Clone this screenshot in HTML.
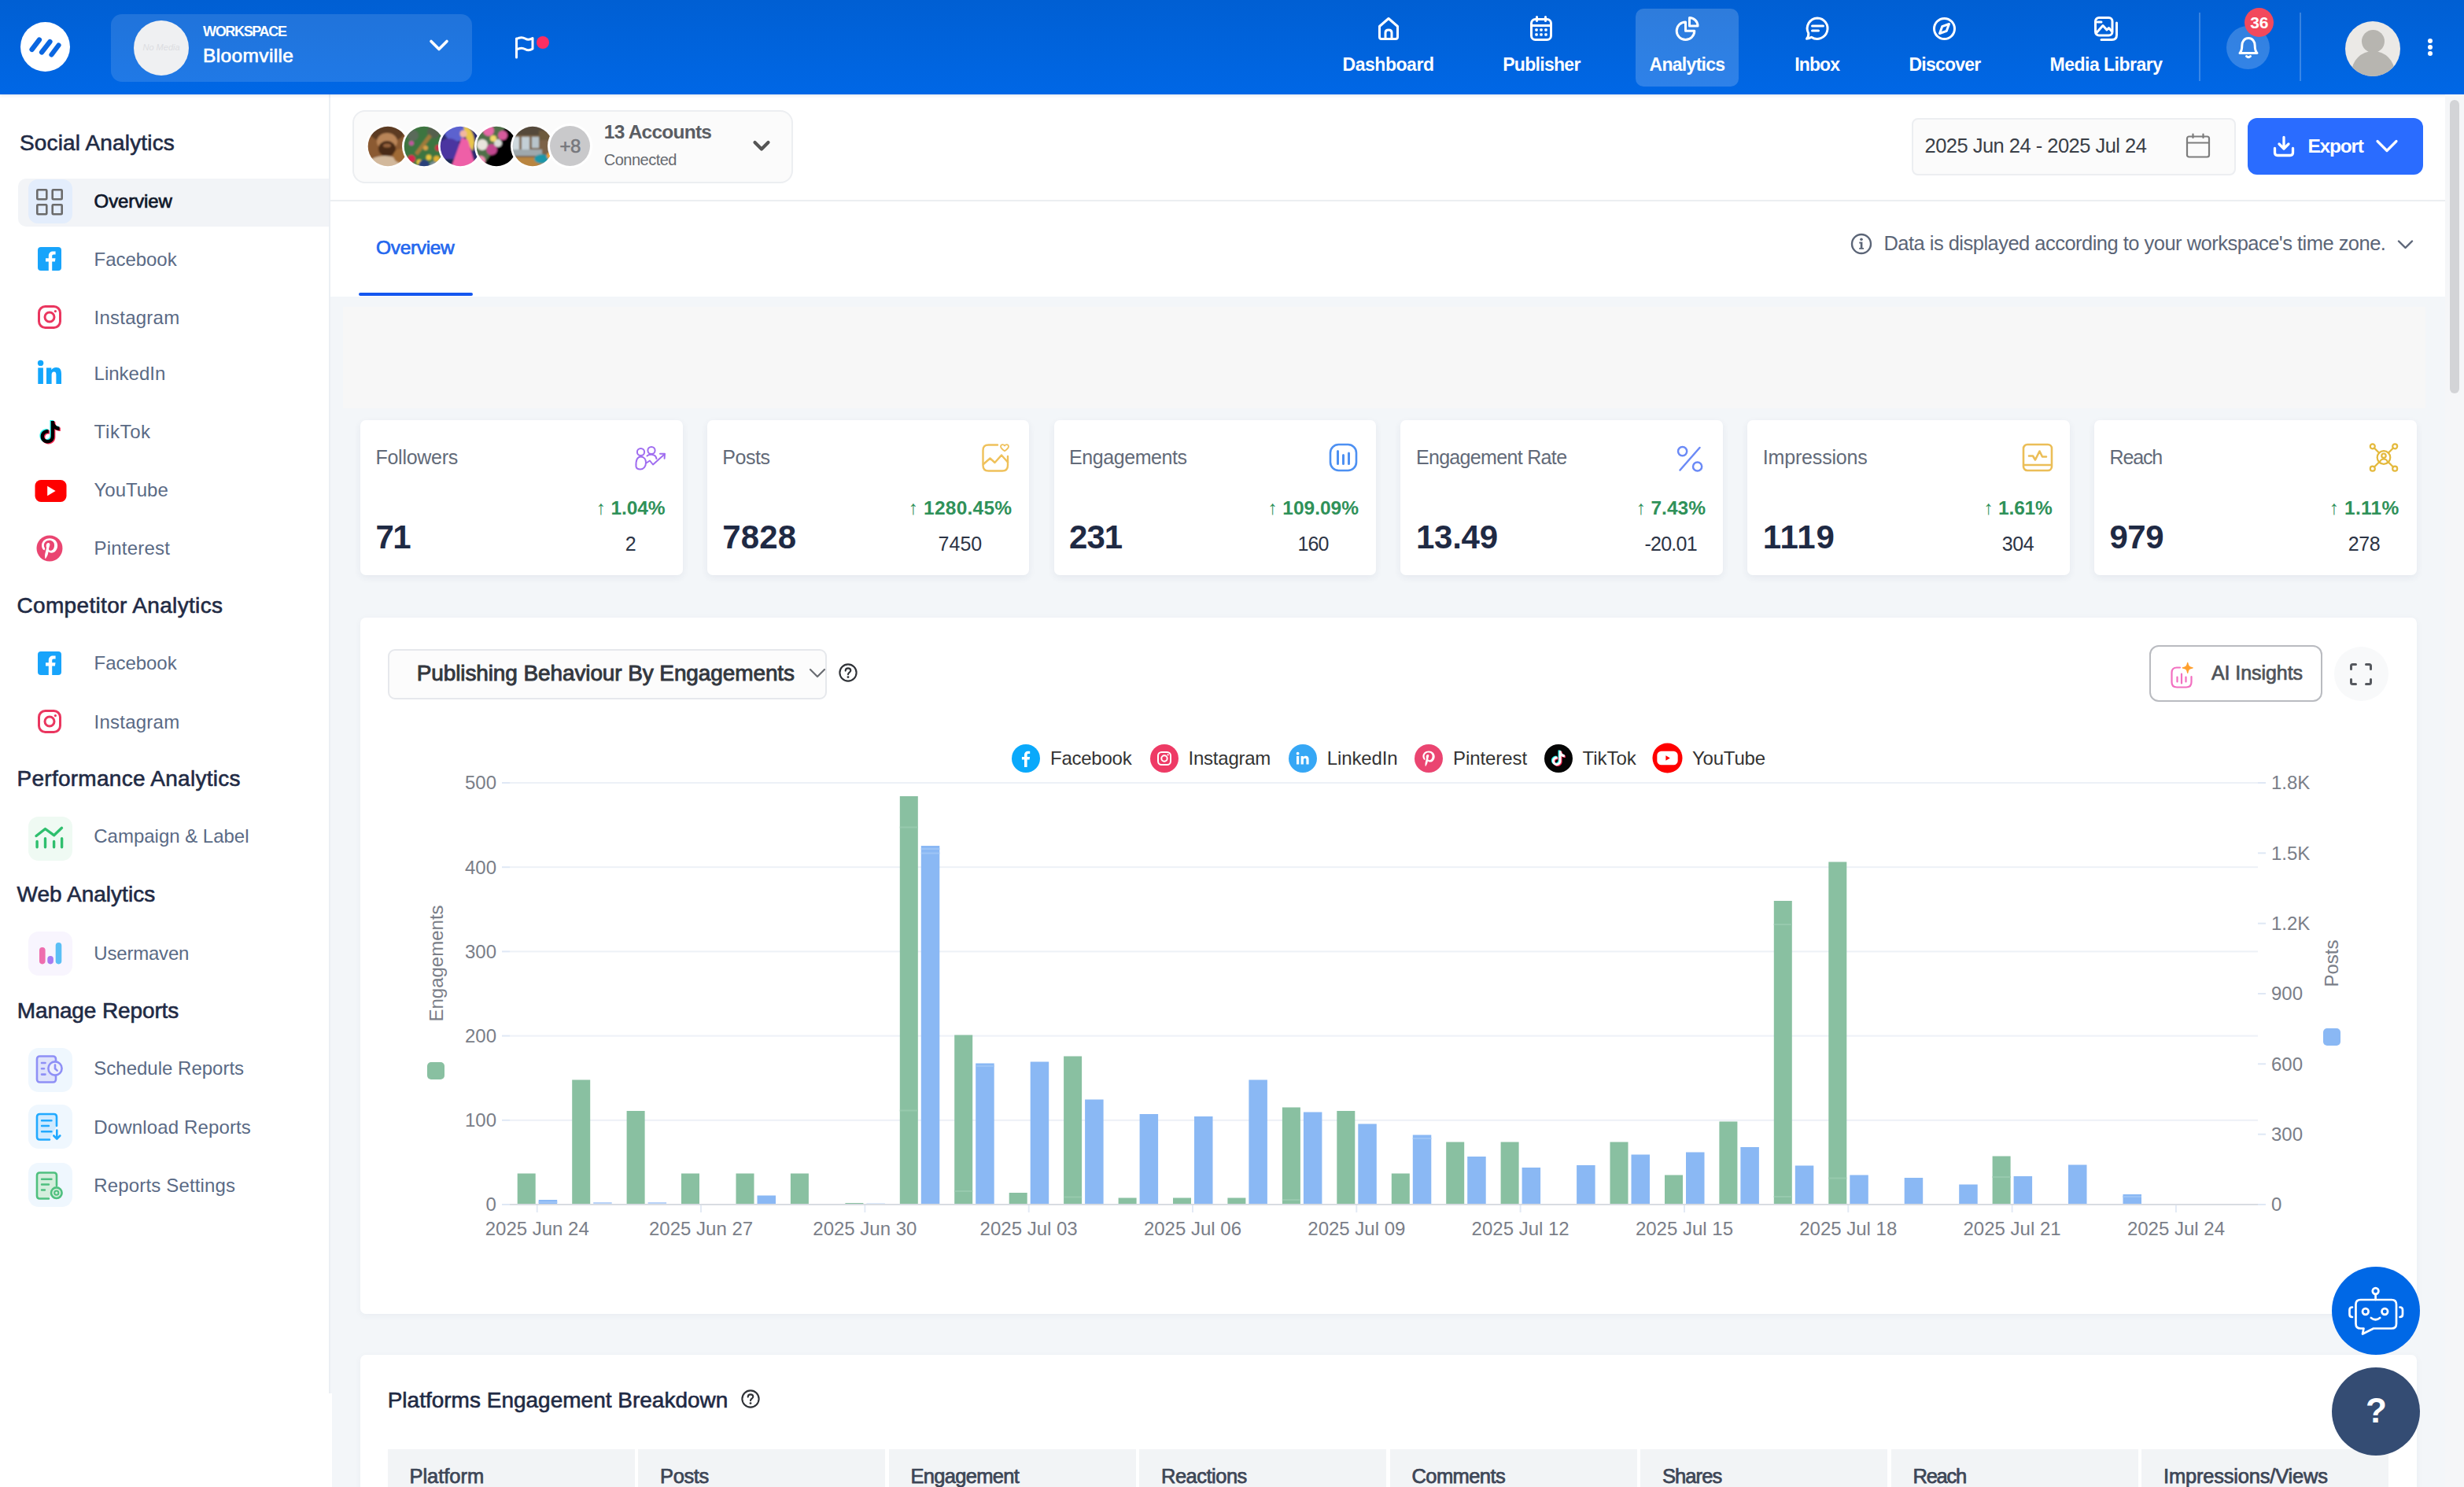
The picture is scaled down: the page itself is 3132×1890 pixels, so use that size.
<!DOCTYPE html>
<html lang="en"><head><meta charset="utf-8"><title>Analytics Overview</title><style>
*{box-sizing:border-box}
html,body{margin:0;padding:0}
body{width:3132px;height:1890px;overflow:hidden;background:#f3f6f9;font-family:"Liberation Sans",sans-serif;position:relative}
.t{position:absolute;white-space:pre;line-height:1}
.abs{position:absolute}
</style></head>
<body>
<div style="position:absolute;left:420px;top:120px;width:2688px;height:257px;background:#fff"></div>
<div style="position:absolute;left:420px;top:254px;width:2688px;height:2px;background:#eceef1"></div>
<div style="position:absolute;left:436px;top:390px;width:2647px;height:128.5px;background:#f7f7f7"></div>
<div style="position:absolute;left:0px;top:120px;width:419px;height:1770px;background:#fff"></div>
<div style="position:absolute;left:418px;top:120px;width:2px;height:1651px;background:#ebeff4"></div>
<div style="position:absolute;left:419px;top:1771px;width:2.5px;height:119px;background:#fff"></div>
<div style="position:absolute;left:448px;top:140px;width:560px;height:93px;background:#fbfbfb;border:2px solid #eceef1;border-radius:16px"></div>
<svg style="position:absolute;left:464.5px;top:157.8px;" width="56" height="56" viewBox="0 0 56 56" fill="none"><circle cx="28" cy="28" r="28" fill="#fff"/><clipPath id="av0"><circle cx="28" cy="28" r="25.3"/></clipPath><filter id="bl0" x="-10%" y="-10%" width="120%" height="120%"><feGaussianBlur stdDeviation="0.9"/></filter><g clip-path="url(#av0)"><g filter="url(#bl0)"><rect width="56" height="56" fill="#8b5a31"/><ellipse cx="27" cy="10" rx="22" ry="12" fill="#5b3a20"/><ellipse cx="27" cy="22" rx="13" ry="11" fill="#b98558"/><ellipse cx="27" cy="31" rx="11" ry="10" fill="#4a2c17"/><ellipse cx="27" cy="27" rx="5" ry="2.5" fill="#94623d"/><ellipse cx="24" cy="52" rx="22" ry="12" fill="#d2b89b"/><circle cx="44" cy="40" r="9" fill="#a06a35"/></g></g></svg>
<svg style="position:absolute;left:510.6px;top:157.8px;" width="56" height="56" viewBox="0 0 56 56" fill="none"><circle cx="28" cy="28" r="28" fill="#fff"/><clipPath id="av1"><circle cx="28" cy="28" r="25.3"/></clipPath><filter id="bl1" x="-10%" y="-10%" width="120%" height="120%"><feGaussianBlur stdDeviation="0.9"/></filter><g clip-path="url(#av1)"><g filter="url(#bl1)"><rect width="56" height="56" fill="#3d7440"/><circle cx="14" cy="14" r="7" fill="#5a6b5a"/><circle cx="40" cy="10" r="8" fill="#54614e"/><path d="M18 38 L36 14" stroke="#a07a3a" stroke-width="5"/><circle cx="12" cy="44" r="5" fill="#d8284f"/><circle cx="22" cy="48" r="3.5" fill="#e8c43c"/><circle cx="34" cy="42" r="3.5" fill="#e8c43c"/><circle cx="44" cy="44" r="4" fill="#e0b030"/><circle cx="46" cy="30" r="4" fill="#c93048"/><circle cx="28" cy="52" r="7" fill="#2b3f7a"/><circle cx="12" cy="24" r="3" fill="#c257a0"/><circle cx="30" cy="30" r="3" fill="#d9a24a"/><circle cx="40" cy="52" r="5" fill="#7d8f95"/></g></g></svg>
<svg style="position:absolute;left:556.7px;top:157.8px;" width="56" height="56" viewBox="0 0 56 56" fill="none"><circle cx="28" cy="28" r="28" fill="#fff"/><clipPath id="av2"><circle cx="28" cy="28" r="25.3"/></clipPath><filter id="bl2" x="-10%" y="-10%" width="120%" height="120%"><feGaussianBlur stdDeviation="0.9"/></filter><g clip-path="url(#av2)"><g filter="url(#bl2)"><rect width="56" height="56" fill="#2a2a6e"/><circle cx="22" cy="8" r="14" fill="#5b62cf"/><circle cx="14" cy="34" r="16" fill="#4b35a0"/><rect x="0" y="44" width="30" height="14" fill="#1e2a55"/><path d="M32 2 C40 2 46 12 46 24 L44 34 L38 26 L34 12 Z" fill="#e9c648"/><circle cx="32" cy="12" r="4.5" fill="#f2b6a0"/><path d="M30 17 L38 20 L48 56 L16 56 Z" fill="#ee5fa7"/><path d="M50 0 H56 V20 Z" fill="#5a55c8"/></g></g></svg>
<svg style="position:absolute;left:602.8px;top:157.8px;" width="56" height="56" viewBox="0 0 56 56" fill="none"><circle cx="28" cy="28" r="28" fill="#fff"/><clipPath id="av3"><circle cx="28" cy="28" r="25.3"/></clipPath><filter id="bl3" x="-10%" y="-10%" width="120%" height="120%"><feGaussianBlur stdDeviation="0.9"/></filter><g clip-path="url(#av3)"><g filter="url(#bl3)"><rect width="56" height="56" fill="#050505"/><path d="M0 0 H40 L30 26 L8 56 H0 Z" fill="#50704a"/><circle cx="18" cy="8" r="7" fill="#e868a8"/><circle cx="36" cy="14" r="6" fill="#d85a9c"/><circle cx="10" cy="26" r="7" fill="#e9e4dc"/><circle cx="22" cy="32" r="7" fill="#c2478f"/><circle cx="30" cy="24" r="5" fill="#d9dcd7"/><circle cx="8" cy="46" r="6" fill="#f08fb5"/><circle cx="24" cy="18" r="4" fill="#f4d96c"/></g></g></svg>
<svg style="position:absolute;left:648.9px;top:157.8px;" width="56" height="56" viewBox="0 0 56 56" fill="none"><circle cx="28" cy="28" r="28" fill="#fff"/><clipPath id="av4"><circle cx="28" cy="28" r="25.3"/></clipPath><filter id="bl4" x="-10%" y="-10%" width="120%" height="120%"><feGaussianBlur stdDeviation="0.9"/></filter><g clip-path="url(#av4)"><g filter="url(#bl4)"><rect width="56" height="56" fill="#7c6348"/><rect x="0" y="0" width="56" height="14" fill="#55483a"/><rect x="2" y="16" width="9" height="16" fill="#cfd9de"/><rect x="14" y="16" width="10" height="16" fill="#c3cfd6"/><rect x="27" y="16" width="9" height="14" fill="#b8c4cb"/><rect x="0" y="32" width="40" height="8" fill="#9fa9ad"/><rect x="0" y="42" width="56" height="14" fill="#b9853f"/><ellipse cx="40" cy="44" rx="10" ry="6" fill="#1f96a8"/><circle cx="50" cy="40" r="4" fill="#f0a030"/><rect x="36" y="8" width="20" height="12" fill="#6d5a3c"/></g></g></svg>
<div style="position:absolute;left:696.1px;top:157.3px;width:57px;height:57px;background:#fff;border-radius:50%"></div>
<div style="position:absolute;left:699.1px;top:160.3px;width:51px;height:51px;background:#c9c9cb;border-radius:50%"></div>
<span class="t" style="left:711.6px;top:174.0px;font-size:24px;color:#77787d;letter-spacing:-0.69px;-webkit-text-stroke:0.6px #77787d;">+8</span>
<span class="t" style="left:767.8px;top:155.9px;font-size:24.5px;color:#5a5d63;font-weight:700;letter-spacing:-0.76px;">13 Accounts</span>
<span class="t" style="left:767.8px;top:193.1px;font-size:20px;color:#666a70;letter-spacing:-0.51px;">Connected</span>
<svg style="position:absolute;left:955px;top:176px;" width="26" height="20" viewBox="0 0 26 20" fill="none"><path d="M4.5 5 L13 13.5 L21.5 5" stroke="#555" stroke-width="4.2" stroke-linecap="round" stroke-linejoin="round"/></svg>
<div style="position:absolute;left:2430px;top:150px;width:412px;height:73px;background:#fbfbfb;border:2px solid #eceef1;border-radius:8px"></div>
<span class="t" style="left:2446.5px;top:173.0px;font-size:25.5px;color:#3a3f47;letter-spacing:-0.52px;">2025 Jun 24 - 2025 Jul 24</span>
<svg style="position:absolute;left:2777px;top:168px;" width="34" height="34" viewBox="0 0 34 34" fill="none"><g stroke="#7d7d7d" stroke-width="2.2" stroke-linejoin="round" stroke-linecap="round"><rect x="3" y="5.5" width="28" height="26" rx="2.5"/><path d="M3 13.5 H31 M10.5 2.5 V7 M23.5 2.5 V7"/></g></svg>
<div style="position:absolute;left:2857px;top:150px;width:223px;height:72px;background:#2a6cff;border-radius:12px"></div>
<svg style="position:absolute;left:2888px;top:171px;" width="30" height="30" viewBox="0 0 30 30" fill="none"><g stroke="#fff" stroke-width="3.3" stroke-linecap="round" stroke-linejoin="round"><path d="M15 3.5 V17.5 M9 12 L15 18 L21 12"/><path d="M3.5 17.5 V23 Q3.5 26.5 7 26.5 H23 Q26.5 26.5 26.5 23 V17.5"/></g></svg>
<span class="t" style="left:2933.4px;top:173.7px;font-size:24.5px;color:#fff;font-weight:700;letter-spacing:-1.22px;">Export</span>
<svg style="position:absolute;left:3018px;top:175px;" width="32" height="22" viewBox="0 0 32 22" fill="none"><path d="M4 4.5 L16 16.5 L28 4.5" stroke="#fff" stroke-width="3.2" stroke-linecap="round" stroke-linejoin="round"/></svg>
<span class="t" style="left:478.0px;top:303.0px;font-size:24.5px;color:#2367ee;letter-spacing:-0.34px;-webkit-text-stroke:0.7px #2367ee;">Overview</span>
<div style="position:absolute;left:456px;top:371.7px;width:144.5px;height:4.6px;background:#1457ef;border-radius:3px"></div>
<svg style="position:absolute;left:2351px;top:295px;" width="30" height="30" viewBox="0 0 30 30" fill="none"><circle cx="15" cy="15" r="12" stroke="#5b6577" stroke-width="2.4"/><g fill="#5b6577"><circle cx="15" cy="9.3" r="1.8"/><path d="M12.3 12.6 H16.4 V20 H18 V21.8 H12.2 V20 H13.8 V14.4 H12.3 Z"/></g></svg>
<span class="t" style="left:2394.4px;top:296.8px;font-size:25.5px;color:#5b6577;letter-spacing:-0.52px;">Data is displayed according to your workspace&#x27;s time zone.</span>
<svg style="position:absolute;left:3045px;top:302px;" width="26" height="18" viewBox="0 0 26 18" fill="none"><path d="M4 4.5 L12.5 13 L21 4.5" stroke="#5b6577" stroke-width="2.4" stroke-linecap="round" stroke-linejoin="round"/></svg>
<div style="position:absolute;left:458.0px;top:534px;width:409.5px;height:197px;background:#fff;border-radius:7px;box-shadow:0 3px 10px rgba(40,60,100,.07)"></div>
<span class="t" style="left:477.5px;top:568.8px;font-size:25px;color:#626a78;letter-spacing:-0.28px;">Followers</span>
<svg style="position:absolute;left:806px;top:566px;" width="42" height="32" viewBox="0 0 42 32" fill="none"><g stroke="#a06df0" stroke-width="2" stroke-linecap="round" stroke-linejoin="round" fill="none"><circle cx="8.5" cy="8.5" r="4.6"/><circle cx="22" cy="6.5" r="4.6"/><path d="M2.5 27 C2 19 4 14.5 8.5 14.5 C13 14.5 15 18 15 22 C15 27 12 30.5 8 30.5 C5 30.5 3 29.5 2.5 27 Z"/><path d="M16.5 13.5 C18 12 20 11.5 22.5 11.8 C26 12.2 28 14 28.5 17"/><path d="M15.5 22.5 L20 19.5 L24 24.5 L38.5 11.5"/><path d="M33 10.8 L39 10.8 L38.6 16.8"/></g></svg>
<span class="t" style="left:477.5px;top:662.4px;font-size:42px;color:#1f2a44;font-weight:700;letter-spacing:-1.56px;">71</span>
<span class="t" style="left:757.5px;top:633.7px;font-size:24.5px;color:#2f9159;font-weight:700;letter-spacing:-0.08px;">↑ 1.04%</span>
<span class="t" style="left:794.8px;top:678.8px;font-size:25px;color:#2c3445;letter-spacing:-0.51px;">2</span>
<div style="position:absolute;left:898.8px;top:534px;width:409.5px;height:197px;background:#fff;border-radius:7px;box-shadow:0 3px 10px rgba(40,60,100,.07)"></div>
<span class="t" style="left:918.3px;top:568.8px;font-size:25px;color:#626a78;letter-spacing:-0.47px;">Posts</span>
<svg style="position:absolute;left:1247px;top:563px;" width="38" height="38" viewBox="0 0 38 38" fill="none"><g stroke="#efc15b" stroke-width="2.4" stroke-linecap="round" stroke-linejoin="round" fill="none"><path d="M21 2.5 H9.5 Q2.5 2.5 2.5 9.5 V28.5 Q2.5 35.5 9.5 35.5 H27 Q34 35.5 34 28.5 V17"/><path d="M3 27 L11.5 19.5 L17.5 25 L26 15.5 L34 24.5"/><path d="M30 10.2 C27 8 25 6.4 25 4.4 C25 2 28.4 1.2 30 3.6 C31.6 1.2 35 2 35 4.4 C35 6.4 33 8 30 10.2 Z" stroke-width="1.8"/></g></svg>
<span class="t" style="left:918.3px;top:662.4px;font-size:42px;color:#1f2a44;font-weight:700;letter-spacing:0.14px;">7828</span>
<span class="t" style="left:1154.6px;top:633.7px;font-size:24.5px;color:#2f9159;font-weight:700;letter-spacing:0.23px;">↑ 1280.45%</span>
<span class="t" style="left:1192.6px;top:678.8px;font-size:25px;color:#2c3445;letter-spacing:0.02px;">7450</span>
<div style="position:absolute;left:1339.6px;top:534px;width:409.5px;height:197px;background:#fff;border-radius:7px;box-shadow:0 3px 10px rgba(40,60,100,.07)"></div>
<span class="t" style="left:1359.1px;top:568.8px;font-size:25px;color:#626a78;letter-spacing:-0.43px;">Engagements</span>
<svg style="position:absolute;left:1689px;top:563px;" width="38" height="38" viewBox="0 0 38 38" fill="none"><g stroke="#4d90f2" stroke-width="2.6" stroke-linecap="round" stroke-linejoin="round" fill="none"><rect x="2" y="2" width="33" height="33" rx="10.5"/><path d="M11.5 10.5 V26.5 M18.5 15.5 V26.5 M25.5 13 V26.5" stroke-width="3"/></g></svg>
<span class="t" style="left:1359.1px;top:662.4px;font-size:42px;color:#1f2a44;font-weight:700;letter-spacing:-1.06px;">231</span>
<span class="t" style="left:1611.2px;top:633.7px;font-size:24.5px;color:#2f9159;font-weight:700;letter-spacing:0.01px;">↑ 109.09%</span>
<span class="t" style="left:1649.6px;top:678.8px;font-size:25px;color:#2c3445;letter-spacing:-0.91px;">160</span>
<div style="position:absolute;left:1780.4px;top:534px;width:409.5px;height:197px;background:#fff;border-radius:7px;box-shadow:0 3px 10px rgba(40,60,100,.07)"></div>
<span class="t" style="left:1799.9px;top:568.8px;font-size:25px;color:#626a78;letter-spacing:-0.67px;">Engagement Rate</span>
<svg style="position:absolute;left:2130.5px;top:565.5px;" width="35" height="35" viewBox="0 0 35 35" fill="none"><g stroke="#6b8af6" stroke-width="2.5" stroke-linecap="round" fill="none"><circle cx="7.6" cy="7.6" r="5.6"/><circle cx="26.6" cy="27" r="5.6"/><path d="M29.5 3 L4.5 31.5"/></g></svg>
<span class="t" style="left:1799.9px;top:662.4px;font-size:42px;color:#1f2a44;font-weight:700;letter-spacing:-0.22px;">13.49</span>
<span class="t" style="left:2079.4px;top:633.7px;font-size:24.5px;color:#2f9159;font-weight:700;">↑ 7.43%</span>
<span class="t" style="left:2090.5px;top:678.8px;font-size:25px;color:#2c3445;letter-spacing:-0.77px;">-20.01</span>
<div style="position:absolute;left:2221.2px;top:534px;width:409.5px;height:197px;background:#fff;border-radius:7px;box-shadow:0 3px 10px rgba(40,60,100,.07)"></div>
<span class="t" style="left:2240.7px;top:568.8px;font-size:25px;color:#626a78;letter-spacing:-0.16px;">Impressions</span>
<svg style="position:absolute;left:2569.5px;top:563px;" width="41" height="38" viewBox="0 0 41 38" fill="none"><g stroke="#ebbe58" stroke-width="2.6" stroke-linecap="round" stroke-linejoin="round" fill="none"><rect x="2" y="2" width="36" height="33" rx="5"/><path d="M2.5 28 H37.5"/><path d="M9 16.5 H14 L17 21.5 L22.5 10.5 L26 17.5 H31"/></g></svg>
<span class="t" style="left:2240.7px;top:662.4px;font-size:42px;color:#1f2a44;font-weight:700;letter-spacing:0.80px;">1119</span>
<span class="t" style="left:2521.3px;top:633.7px;font-size:24.5px;color:#2f9159;font-weight:700;letter-spacing:-0.16px;">↑ 1.61%</span>
<span class="t" style="left:2544.7px;top:678.8px;font-size:25px;color:#2c3445;letter-spacing:-0.34px;">304</span>
<div style="position:absolute;left:2662.0px;top:534px;width:409.5px;height:197px;background:#fff;border-radius:7px;box-shadow:0 3px 10px rgba(40,60,100,.07)"></div>
<span class="t" style="left:2681.5px;top:568.8px;font-size:25px;color:#626a78;letter-spacing:-1.15px;">Reach</span>
<svg style="position:absolute;left:3011px;top:563.3px;" width="38" height="37" viewBox="0 0 38 37" fill="none"><g stroke="#e4b93c" stroke-width="2.2" stroke-linecap="round" stroke-linejoin="round" fill="none"><circle cx="19" cy="18.5" r="8.3"/><circle cx="19" cy="16.2" r="2.7"/><path d="M14 24.5 C14.8 21.3 17 20.5 19 20.5 C21 20.5 23.2 21.3 24 24.5"/><path d="M13 12.5 L7 6.5 M25 12.5 L31 6.5 M13 24.5 L7 30.5 M25 24.5 L31 30.5"/><circle cx="4.8" cy="4.3" r="3"/><circle cx="33.2" cy="4.3" r="3"/><circle cx="4.8" cy="32.7" r="3"/><circle cx="33.2" cy="32.7" r="3"/></g></svg>
<span class="t" style="left:2681.5px;top:662.4px;font-size:42px;color:#1f2a44;font-weight:700;letter-spacing:-0.53px;">979</span>
<span class="t" style="left:2960.5px;top:633.7px;font-size:24.5px;color:#2f9159;font-weight:700;letter-spacing:0.26px;">↑ 1.11%</span>
<span class="t" style="left:2984.7px;top:678.8px;font-size:25px;color:#2c3445;letter-spacing:-0.34px;">278</span>
<div style="position:absolute;left:458px;top:785px;width:2614px;height:885px;background:#fff;border-radius:7px;box-shadow:0 2px 8px rgba(40,60,100,.05)"></div>
<div style="position:absolute;left:493px;top:825px;width:558px;height:64px;background:#fcfcfc;border:2px solid #e6e8ec;border-radius:9px"></div>
<span class="t" style="left:529.7px;top:842.3px;font-size:28px;color:#33373e;letter-spacing:-0.11px;-webkit-text-stroke:0.9px #33373e;">Publishing Behaviour By Engagements</span>
<svg style="position:absolute;left:1026px;top:844px;" width="26" height="24" viewBox="0 0 26 24" fill="none"><path d="M4 7 L13 16 L22 7" stroke="#6a6d73" stroke-width="2.2" stroke-linecap="round" stroke-linejoin="round"/></svg>
<svg style="position:absolute;left:1065px;top:842px;" width="26" height="26" viewBox="0 0 26 26" fill="none"><circle cx="13" cy="13" r="10.600" stroke="#2f3237" stroke-width="2.100"/><path d="M9.700 10.600 C9.700 8.600 11.100 7.400 13 7.400 C14.900 7.400 16.300 8.600 16.300 10.300 C16.300 12.600 13 12.700 13 15.200" stroke="#2f3237" stroke-width="2.100" stroke-linecap="round" fill="none"/><circle cx="13" cy="18.600" r="1.400" fill="#2f3237"/></svg>
<div style="position:absolute;left:2732px;top:820px;width:220px;height:72px;background:#fff;border:2px solid #b9bbc0;border-radius:12px"></div>
<svg style="position:absolute;left:2757px;top:836px;" width="36" height="42" viewBox="0 0 36 42" fill="none"><g stroke="#f26fc0" stroke-width="2.2" stroke-linecap="round" stroke-linejoin="round" fill="none"><path d="M14 12.5 H10 Q3.5 12.5 3.5 19 V31 Q3.5 37.5 10 37.5 H22 Q28.500 37.5 28.5 31 V24"/><path d="M10.500 24.500 V30.500 M16 20.500 V32.500 M21.500 24.500 V30.500"/></g><path d="M23.700 6.300 C24.500 10.800 25.700 12 30.200 12.800 C25.700 13.600 24.500 14.800 23.700 19.300 C22.900 14.800 21.700 13.600 17.200 12.800 C21.700 12 22.900 10.800 23.700 6.300 Z" fill="#ffa02e" stroke="#ffa02e" stroke-width="1.2" stroke-linejoin="round"/></svg>
<span class="t" style="left:2811.0px;top:843.1px;font-size:25px;color:#4f5359;letter-spacing:-0.07px;-webkit-text-stroke:0.7px #4f5359;">AI Insights</span>
<div style="position:absolute;left:2967px;top:822px;width:69px;height:69px;background:#f8f9fa;border-radius:50%"></div>
<svg style="position:absolute;left:2985px;top:841px;" width="32" height="32" viewBox="0 0 32 32" fill="none"><g stroke="#55585e" stroke-width="3" stroke-linecap="round" stroke-linejoin="round" fill="none"><path d="M3.5 9.500 V5.500 Q3.5 3.5 5.500 3.5 H9.500"/><path d="M22.500 3.5 H26.500 Q28.500 3.5 28.500 5.500 V9.500"/><path d="M28.500 22.500 V26.500 Q28.500 28.500 26.500 28.500 H22.500"/><path d="M9.500 28.500 H5.500 Q3.5 28.500 3.5 26.500 V22.500"/></g></svg>
<svg style="position:absolute;left:458px;top:900px" width="2614" height="760" viewBox="0 0 2614 760"><rect x="180" y="630.0" width="10" height="2" fill="#dfe8f5"/><rect x="190.0" y="522.8" width="2222.0" height="2" fill="#edf1f7"/><rect x="180" y="522.8" width="10" height="2" fill="#dfe8f5"/><rect x="190.0" y="415.6" width="2222.0" height="2" fill="#edf1f7"/><rect x="180" y="415.6" width="10" height="2" fill="#dfe8f5"/><rect x="190.0" y="308.4" width="2222.0" height="2" fill="#edf1f7"/><rect x="180" y="308.4" width="10" height="2" fill="#dfe8f5"/><rect x="190.0" y="201.2" width="2222.0" height="2" fill="#edf1f7"/><rect x="180" y="201.2" width="10" height="2" fill="#dfe8f5"/><rect x="190.0" y="94.0" width="2222.0" height="2" fill="#edf1f7"/><rect x="180" y="94.0" width="10" height="2" fill="#dfe8f5"/><rect x="2412" y="630.0" width="10" height="2" fill="#dfe8f5"/><rect x="2412" y="540.7" width="10" height="2" fill="#dfe8f5"/><rect x="2412" y="451.3" width="10" height="2" fill="#dfe8f5"/><rect x="2412" y="362.0" width="10" height="2" fill="#dfe8f5"/><rect x="2412" y="272.7" width="10" height="2" fill="#dfe8f5"/><rect x="2412" y="183.3" width="10" height="2" fill="#dfe8f5"/><rect x="2412" y="94.0" width="10" height="2" fill="#dfe8f5"/><rect x="199.7" y="591.5" width="23" height="39.5" fill="#89c0a1"/><rect x="226.7" y="625.0" width="23.5" height="6.0" fill="#8ab8f4"/><rect x="226.7" y="627.0" width="23.5" height="2" fill="#9dc4f6"/><rect x="269.2" y="472.5" width="23" height="158.5" fill="#89c0a1"/><rect x="296.2" y="628.0" width="23.5" height="3.0" fill="#b9d3f8"/><rect x="338.6" y="512.0" width="23" height="119.0" fill="#89c0a1"/><rect x="365.6" y="628.0" width="23.5" height="3.0" fill="#b9d3f8"/><rect x="408.0" y="591.5" width="23" height="39.5" fill="#89c0a1"/><rect x="435.0" y="630.0" width="23.5" height="1.0" fill="#b9d3f8"/><rect x="477.5" y="591.5" width="23" height="39.5" fill="#89c0a1"/><rect x="504.5" y="619.5" width="23.5" height="11.5" fill="#8ab8f4"/><rect x="546.9" y="591.5" width="23" height="39.5" fill="#89c0a1"/><rect x="573.9" y="630.2" width="23.5" height="0.8" fill="#b9d3f8"/><rect x="616.4" y="629.0" width="23" height="2.0" fill="#89c0a1"/><rect x="643.4" y="629.5" width="23.5" height="1.5" fill="#b9d3f8"/><rect x="685.8" y="112.0" width="23" height="519.0" fill="#89c0a1"/><rect x="685.8" y="150.5" width="23" height="2" fill="#97c9ad"/><rect x="685.8" y="510.5" width="23" height="2" fill="#97c9ad"/><rect x="712.8" y="175.0" width="23.5" height="456.0" fill="#8ab8f4"/><rect x="712.8" y="178.0" width="23.5" height="2" fill="#9dc4f6"/><rect x="712.8" y="183.5" width="23.5" height="2" fill="#9dc4f6"/><rect x="755.2" y="415.5" width="23" height="215.5" fill="#89c0a1"/><rect x="755.2" y="613.0" width="23" height="2" fill="#97c9ad"/><rect x="782.2" y="451.5" width="23.5" height="179.5" fill="#8ab8f4"/><rect x="782.2" y="454.0" width="23.5" height="2" fill="#9dc4f6"/><rect x="824.7" y="616.0" width="23" height="15.0" fill="#89c0a1"/><rect x="851.7" y="449.5" width="23.5" height="181.5" fill="#8ab8f4"/><rect x="894.1" y="442.5" width="23" height="188.5" fill="#89c0a1"/><rect x="894.1" y="620.5" width="23" height="2" fill="#97c9ad"/><rect x="921.1" y="497.5" width="23.5" height="133.5" fill="#8ab8f4"/><rect x="963.6" y="622.5" width="23" height="8.5" fill="#89c0a1"/><rect x="990.6" y="516.0" width="23.5" height="115.0" fill="#8ab8f4"/><rect x="1033.0" y="622.5" width="23" height="8.5" fill="#89c0a1"/><rect x="1060.0" y="519.0" width="23.5" height="112.0" fill="#8ab8f4"/><rect x="1102.4" y="622.5" width="23" height="8.5" fill="#89c0a1"/><rect x="1129.4" y="472.5" width="23.5" height="158.5" fill="#8ab8f4"/><rect x="1171.9" y="507.5" width="23" height="123.5" fill="#89c0a1"/><rect x="1171.9" y="624.0" width="23" height="2" fill="#97c9ad"/><rect x="1198.9" y="513.5" width="23.5" height="117.5" fill="#8ab8f4"/><rect x="1241.3" y="512.0" width="23" height="119.0" fill="#89c0a1"/><rect x="1268.3" y="528.5" width="23.5" height="102.5" fill="#8ab8f4"/><rect x="1310.8" y="591.5" width="23" height="39.5" fill="#89c0a1"/><rect x="1337.8" y="542.5" width="23.5" height="88.5" fill="#8ab8f4"/><rect x="1337.8" y="546.0" width="23.5" height="2" fill="#9dc4f6"/><rect x="1380.2" y="551.5" width="23" height="79.5" fill="#89c0a1"/><rect x="1407.2" y="570.0" width="23.5" height="61.0" fill="#8ab8f4"/><rect x="1449.6" y="551.5" width="23" height="79.5" fill="#89c0a1"/><rect x="1476.6" y="584.0" width="23.5" height="47.0" fill="#8ab8f4"/><rect x="1546.1" y="581.0" width="23.5" height="50.0" fill="#8ab8f4"/><rect x="1588.5" y="551.5" width="23" height="79.5" fill="#89c0a1"/><rect x="1615.5" y="567.5" width="23.5" height="63.5" fill="#8ab8f4"/><rect x="1658.0" y="593.5" width="23" height="37.5" fill="#89c0a1"/><rect x="1685.0" y="564.5" width="23.5" height="66.5" fill="#8ab8f4"/><rect x="1727.4" y="525.5" width="23" height="105.5" fill="#89c0a1"/><rect x="1754.4" y="558.0" width="23.5" height="73.0" fill="#8ab8f4"/><rect x="1796.8" y="245.0" width="23" height="386.0" fill="#89c0a1"/><rect x="1796.8" y="274.0" width="23" height="2" fill="#97c9ad"/><rect x="1796.8" y="620.0" width="23" height="2" fill="#97c9ad"/><rect x="1823.8" y="581.5" width="23.5" height="49.5" fill="#8ab8f4"/><rect x="1866.3" y="195.5" width="23" height="435.5" fill="#89c0a1"/><rect x="1866.3" y="596.5" width="23" height="2" fill="#97c9ad"/><rect x="1893.3" y="593.5" width="23.5" height="37.5" fill="#8ab8f4"/><rect x="1962.7" y="597.0" width="23.5" height="34.0" fill="#8ab8f4"/><rect x="2032.2" y="605.5" width="23.5" height="25.5" fill="#8ab8f4"/><rect x="2074.6" y="569.5" width="23" height="61.5" fill="#89c0a1"/><rect x="2074.6" y="595.0" width="23" height="2" fill="#97c9ad"/><rect x="2101.6" y="595.0" width="23.5" height="36.0" fill="#8ab8f4"/><rect x="2171.0" y="580.5" width="23.5" height="50.5" fill="#8ab8f4"/><rect x="2240.5" y="618.0" width="23.5" height="13.0" fill="#8ab8f4"/><rect x="2240.5" y="620.0" width="23.5" height="2" fill="#9dc4f6"/><rect x="2309.9" y="630.2" width="23.5" height="0.8" fill="#b9d3f8"/><rect x="190.0" y="630.0" width="2222.0" height="2" fill="#d9dce2"/><rect x="223.7" y="632.0" width="2" height="9" fill="#e3eaf5"/><rect x="432.0" y="632.0" width="2" height="9" fill="#e3eaf5"/><rect x="640.4" y="632.0" width="2" height="9" fill="#e3eaf5"/><rect x="848.7" y="632.0" width="2" height="9" fill="#e3eaf5"/><rect x="1057.0" y="632.0" width="2" height="9" fill="#e3eaf5"/><rect x="1265.3" y="632.0" width="2" height="9" fill="#e3eaf5"/><rect x="1473.6" y="632.0" width="2" height="9" fill="#e3eaf5"/><rect x="1682.0" y="632.0" width="2" height="9" fill="#e3eaf5"/><rect x="1890.3" y="632.0" width="2" height="9" fill="#e3eaf5"/><rect x="2098.6" y="632.0" width="2" height="9" fill="#e3eaf5"/><rect x="2306.9" y="632.0" width="2" height="9" fill="#e3eaf5"/><rect x="85" y="450" width="22" height="22" rx="5" fill="#89c0a1"/><rect x="2495" y="407" width="22" height="22" rx="5" fill="#8ab8f4"/><text transform="translate(105,324.5) rotate(-90)" text-anchor="middle" font-size="24" fill="#7a7e88" font-family="Liberation Sans, sans-serif">Engagements</text><text transform="translate(2514,324.5) rotate(-90)" text-anchor="middle" font-size="24" fill="#7a7e88" font-family="Liberation Sans, sans-serif">Posts</text></svg>
<span class="t" style="left:617.6px;top:1519.3px;font-size:24px;color:#7a7e88;">0</span>
<span class="t" style="left:591.0px;top:1412.1px;font-size:24px;color:#7a7e88;">100</span>
<span class="t" style="left:591.0px;top:1304.9px;font-size:24px;color:#7a7e88;">200</span>
<span class="t" style="left:591.0px;top:1197.7px;font-size:24px;color:#7a7e88;">300</span>
<span class="t" style="left:591.0px;top:1090.5px;font-size:24px;color:#7a7e88;">400</span>
<span class="t" style="left:591.0px;top:983.3px;font-size:24px;color:#7a7e88;">500</span>
<span class="t" style="left:2887.0px;top:1519.3px;font-size:24px;color:#7a7e88;">0</span>
<span class="t" style="left:2887.0px;top:1430.0px;font-size:24px;color:#7a7e88;">300</span>
<span class="t" style="left:2887.0px;top:1340.6px;font-size:24px;color:#7a7e88;">600</span>
<span class="t" style="left:2887.0px;top:1251.3px;font-size:24px;color:#7a7e88;">900</span>
<span class="t" style="left:2887.0px;top:1162.0px;font-size:24px;color:#7a7e88;">1.2K</span>
<span class="t" style="left:2887.0px;top:1072.6px;font-size:24px;color:#7a7e88;">1.5K</span>
<span class="t" style="left:2887.0px;top:983.3px;font-size:24px;color:#7a7e88;">1.8K</span>
<span class="t" style="left:616.7px;top:1549.7px;font-size:24px;color:#7a7e88;">2025 Jun 24</span>
<span class="t" style="left:825.0px;top:1549.7px;font-size:24px;color:#7a7e88;">2025 Jun 27</span>
<span class="t" style="left:1033.3px;top:1549.7px;font-size:24px;color:#7a7e88;">2025 Jun 30</span>
<span class="t" style="left:1245.6px;top:1549.7px;font-size:24px;color:#7a7e88;">2025 Jul 03</span>
<span class="t" style="left:1453.9px;top:1549.7px;font-size:24px;color:#7a7e88;">2025 Jul 06</span>
<span class="t" style="left:1662.3px;top:1549.7px;font-size:24px;color:#7a7e88;">2025 Jul 09</span>
<span class="t" style="left:1870.6px;top:1549.7px;font-size:24px;color:#7a7e88;">2025 Jul 12</span>
<span class="t" style="left:2078.9px;top:1549.7px;font-size:24px;color:#7a7e88;">2025 Jul 15</span>
<span class="t" style="left:2287.2px;top:1549.7px;font-size:24px;color:#7a7e88;">2025 Jul 18</span>
<span class="t" style="left:2495.5px;top:1549.7px;font-size:24px;color:#7a7e88;">2025 Jul 21</span>
<span class="t" style="left:2703.9px;top:1549.7px;font-size:24px;color:#7a7e88;">2025 Jul 24</span>
<span class="t" style="left:1335.0px;top:951.5px;font-size:24px;color:#333;letter-spacing:-0.25px;">Facebook</span>
<svg style="position:absolute;left:1285.8px;top:945.5px;" width="36" height="36" viewBox="0 0 36 36" fill="none"><circle cx="18" cy="18" r="18" fill="#0aa9fb"/><path d="M19.6 29 V19.6 H22.6 L23.1 16 H19.6 V13.8 C19.6 12.8 20 12.1 21.4 12.1 H23.2 V8.9 C22.7 8.8 21.7 8.7 20.7 8.7 C18 8.7 16 10.4 16 13.5 V16 H12.9 V19.6 H16 V29 Z" fill="#fff"/></svg>
<span class="t" style="left:1510.6px;top:951.5px;font-size:24px;color:#333;letter-spacing:-0.25px;">Instagram</span>
<svg style="position:absolute;left:1461.6px;top:945.5px;" width="36" height="36" viewBox="0 0 36 36" fill="none"><circle cx="18" cy="18" r="18" fill="#ee3a65"/><rect x="10" y="10" width="16" height="16" rx="4.5" stroke="#fff" stroke-width="2" fill="none"/><circle cx="18" cy="18" r="3.7" stroke="#fff" stroke-width="2" fill="none"/><circle cx="22.6" cy="13.4" r="1.1" fill="#fff"/></svg>
<span class="t" style="left:1686.8px;top:951.5px;font-size:24px;color:#333;letter-spacing:-0.13px;">LinkedIn</span>
<svg style="position:absolute;left:1638.2px;top:945.5px;" width="36" height="36" viewBox="0 0 36 36" fill="none"><circle cx="18" cy="18" r="18" fill="#36a7f5"/><g fill="#fff"><circle cx="11.6" cy="11.7" r="1.9"/><rect x="10" y="15" width="3.2" height="10.5"/><path d="M15.6 15 H18.7 V16.4 C19.2 15.5 20.3 14.8 21.8 14.8 C24.6 14.8 25.6 16.5 25.6 19.3 V25.5 H22.4 V19.9 C22.4 18.6 22.1 17.7 20.9 17.7 C19.6 17.7 18.9 18.6 18.9 19.9 V25.5 H15.6 Z"/></g></svg>
<span class="t" style="left:1847.0px;top:951.5px;font-size:24px;color:#333;letter-spacing:-0.08px;">Pinterest</span>
<svg style="position:absolute;left:1798.4px;top:945.5px;" width="36" height="36" viewBox="0 0 36 36" fill="none"><circle cx="18" cy="18" r="18" fill="#ea4571"/><path d="M16.4 7.2 C11.3 7.2 8.6 10.5 8.6 14.1 C8.6 15.8 9.5 17.9 11 18.6 C11.2 18.7 11.4 18.6 11.4 18.4 L11.8 17 C11.8 16.9 11.8 16.7 11.7 16.6 C11.2 16 10.8 15 10.8 14 C10.8 11.5 12.7 9.1 16 9.1 C18.8 9.1 20.8 11 20.8 13.7 C20.8 16.8 19.2 18.9 17.2 18.9 C16.1 18.9 15.2 18 15.5 16.9 C15.8 15.5 16.5 14.1 16.5 13.1 C16.5 12.2 16 11.5 15 11.5 C13.9 11.5 12.9 12.7 12.9 14.3 C12.9 15.3 13.3 16 13.3 16 L11.9 21.9 C11.5 23.6 11.9 26.4 12 26.6 C12 26.8 12.2 26.8 12.3 26.7 C12.5 26.5 14 24.3 14.5 22.6 L15.2 19.9 C15.6 20.6 16.7 21.2 17.9 21.2 C21.4 21.2 23.9 18 23.9 14 C23.9 10.2 20.8 7.2 16.4 7.2 Z" fill="#fff" transform="translate(18 18) scale(1.0) translate(-16.2 -16.6)"/></svg>
<span class="t" style="left:2011.6px;top:951.5px;font-size:24px;color:#333;letter-spacing:-0.08px;">TikTok</span>
<svg style="position:absolute;left:1963.4px;top:945.5px;" width="36" height="36" viewBox="0 0 36 36" fill="none"><circle cx="18" cy="18" r="18" fill="#050505"/><g transform="translate(7.6 7) scale(0.68)"><path transform="translate(-1.6,-1.2)" d="M20.5 2 H16.2 V21 C16.2 23.5 14.3 25.3 12 25.3 C9.6 25.3 7.8 23.4 7.8 21.1 C7.8 18.7 9.7 16.9 12 16.9 C12.5 16.9 12.9 17 13.3 17.1 V12.7 C12.9 12.6 12.4 12.6 12 12.6 C7.3 12.6 3.5 16.4 3.5 21.1 C3.5 25.8 7.3 29.6 12 29.6 C16.7 29.6 20.5 25.8 20.5 21.1 V11.6 C22.3 12.9 24.5 13.6 26.8 13.6 V9.3 C23.3 9.3 20.5 6.5 20.5 3 Z" fill="#25f4ee"/><path transform="translate(1.6,1.2)" d="M20.5 2 H16.2 V21 C16.2 23.5 14.3 25.3 12 25.3 C9.6 25.3 7.8 23.4 7.8 21.1 C7.8 18.7 9.7 16.9 12 16.9 C12.5 16.9 12.9 17 13.3 17.1 V12.7 C12.9 12.6 12.4 12.6 12 12.6 C7.3 12.6 3.5 16.4 3.5 21.1 C3.5 25.8 7.3 29.6 12 29.6 C16.7 29.6 20.5 25.8 20.5 21.1 V11.6 C22.3 12.9 24.5 13.6 26.8 13.6 V9.3 C23.3 9.3 20.5 6.5 20.5 3 Z" fill="#fe2c55"/><path transform="translate(0,0)" d="M20.5 2 H16.2 V21 C16.2 23.5 14.3 25.3 12 25.3 C9.6 25.3 7.8 23.4 7.8 21.1 C7.8 18.7 9.7 16.9 12 16.9 C12.5 16.9 12.9 17 13.3 17.1 V12.7 C12.9 12.6 12.4 12.6 12 12.6 C7.3 12.6 3.5 16.4 3.5 21.1 C3.5 25.8 7.3 29.6 12 29.6 C16.7 29.6 20.5 25.8 20.5 21.1 V11.6 C22.3 12.9 24.5 13.6 26.8 13.6 V9.3 C23.3 9.3 20.5 6.5 20.5 3 Z" fill="#fff"/></g></svg>
<span class="t" style="left:2151.0px;top:951.5px;font-size:24px;color:#333;letter-spacing:-0.22px;">YouTube</span>
<svg style="position:absolute;left:2100.3px;top:944px;" width="39" height="39" viewBox="0 0 40 40" fill="none"><circle cx="20" cy="20" r="19.5" fill="#ff0000"/><rect x="6.5" y="11" width="27" height="18" rx="5.5" fill="#fff"/><path d="M17.8 16.6 L23.4 20 L17.8 23.4 Z" fill="#ff0000"/></svg>
<div style="position:absolute;left:458px;top:1722px;width:2614px;height:200px;background:#fff;border-radius:7px;box-shadow:0 2px 8px rgba(40,60,100,.05)"></div>
<span class="t" style="left:492.7px;top:1765.8px;font-size:28px;color:#1f2a44;-webkit-text-stroke:0.6px #1f2a44;">Platforms Engagement Breakdown</span>
<svg style="position:absolute;left:940.7px;top:1764.6px;" width="26" height="26" viewBox="0 0 26 26" fill="none"><circle cx="13" cy="13" r="10.600" stroke="#2f3237" stroke-width="2.100"/><path d="M9.700 10.600 C9.700 8.600 11.100 7.400 13 7.400 C14.900 7.400 16.300 8.600 16.300 10.300 C16.300 12.600 13 12.700 13 15.200" stroke="#2f3237" stroke-width="2.100" stroke-linecap="round" fill="none"/><circle cx="13" cy="18.600" r="1.400" fill="#2f3237"/></svg>
<div style="position:absolute;left:492.7px;top:1842px;width:314px;height:60px;background:#f2f4f6"></div>
<span class="t" style="left:520.5px;top:1864.4px;font-size:25.5px;color:#3d4656;letter-spacing:-0.04px;-webkit-text-stroke:0.75px #3d4656;">Platform</span>
<div style="position:absolute;left:811.2px;top:1842px;width:314px;height:60px;background:#f2f4f6"></div>
<span class="t" style="left:839.0px;top:1864.4px;font-size:25.5px;color:#3d4656;letter-spacing:-0.36px;-webkit-text-stroke:0.75px #3d4656;">Posts</span>
<div style="position:absolute;left:1129.7px;top:1842px;width:314px;height:60px;background:#f2f4f6"></div>
<span class="t" style="left:1157.5px;top:1864.4px;font-size:25.5px;color:#3d4656;letter-spacing:-0.70px;-webkit-text-stroke:0.75px #3d4656;">Engagement</span>
<div style="position:absolute;left:1448.2px;top:1842px;width:314px;height:60px;background:#f2f4f6"></div>
<span class="t" style="left:1476.0px;top:1864.4px;font-size:25.5px;color:#3d4656;letter-spacing:-0.51px;-webkit-text-stroke:0.75px #3d4656;">Reactions</span>
<div style="position:absolute;left:1766.7px;top:1842px;width:314px;height:60px;background:#f2f4f6"></div>
<span class="t" style="left:1794.5px;top:1864.4px;font-size:25.5px;color:#3d4656;letter-spacing:-0.59px;-webkit-text-stroke:0.75px #3d4656;">Comments</span>
<div style="position:absolute;left:2085.2px;top:1842px;width:314px;height:60px;background:#f2f4f6"></div>
<span class="t" style="left:2113.0px;top:1864.4px;font-size:25.5px;color:#3d4656;letter-spacing:-0.93px;-webkit-text-stroke:0.75px #3d4656;">Shares</span>
<div style="position:absolute;left:2403.7px;top:1842px;width:314px;height:60px;background:#f2f4f6"></div>
<span class="t" style="left:2431.5px;top:1864.4px;font-size:25.5px;color:#3d4656;letter-spacing:-1.26px;-webkit-text-stroke:0.75px #3d4656;">Reach</span>
<div style="position:absolute;left:2722.2px;top:1842px;width:314px;height:60px;background:#f2f4f6"></div>
<span class="t" style="left:2750.0px;top:1864.4px;font-size:25.5px;color:#3d4656;letter-spacing:-0.19px;-webkit-text-stroke:0.75px #3d4656;">Impressions/Views</span>
<span class="t" style="left:25.0px;top:168.3px;font-size:28px;color:#1f2a44;letter-spacing:0.15px;-webkit-text-stroke:0.6px #1f2a44;">Social Analytics</span>
<div style="position:absolute;left:23px;top:227px;width:395px;height:61px;background:#f2f4f7;border-radius:10px 0 0 10px"></div>
<div style="position:absolute;left:36px;top:228px;width:56px;height:56px;background:#e3edfc;border-radius:12px"></div>
<svg style="position:absolute;left:36px;top:228px;" width="56" height="56" viewBox="0 0 56 56" fill="none"><g stroke="#6b6b6b" stroke-width="2.6" fill="none"><rect x="11.3" y="13.3" width="12" height="12" rx="1"/><rect x="30.7" y="13.3" width="12" height="12" rx="1"/><rect x="11.3" y="32.3" width="12" height="12" rx="1"/><rect x="30.7" y="32.3" width="12" height="12" rx="1"/></g></svg>
<span class="t" style="left:119.6px;top:243.7px;font-size:24px;color:#0f172a;letter-spacing:-0.10px;-webkit-text-stroke:0.7px #0f172a;">Overview</span>
<span class="t" style="left:119.6px;top:317.7px;font-size:24px;color:#5a6a85;letter-spacing:-0.05px;">Facebook</span>
<span class="t" style="left:119.6px;top:392.1px;font-size:24px;color:#5a6a85;letter-spacing:0.23px;">Instagram</span>
<span class="t" style="left:119.6px;top:463.4px;font-size:24px;color:#5a6a85;">LinkedIn</span>
<span class="t" style="left:119.6px;top:537.4px;font-size:24px;color:#5a6a85;letter-spacing:0.61px;">TikTok</span>
<span class="t" style="left:119.6px;top:611.4px;font-size:24px;color:#5a6a85;letter-spacing:-0.03px;">YouTube</span>
<span class="t" style="left:119.6px;top:685.2px;font-size:24px;color:#5a6a85;letter-spacing:0.19px;">Pinterest</span>
<svg style="position:absolute;left:46.6px;top:312.8px;" width="32" height="32" viewBox="0 0 32 32" fill="none"><rect x="1" y="1" width="30" height="30" rx="4" fill="#18a4fb"/><path transform="translate(-2.6 0)" d="M21.8 31 V19.6 H25.5 L26.1 15.2 H21.8 V12.6 C21.8 11.3 22.3 10.5 24 10.5 H26.2 V6.6 C25.6 6.5 24.4 6.4 23.1 6.4 C19.8 6.4 17.4 8.4 17.4 12.2 V15.2 H13.6 V19.6 H17.4 V31 Z" fill="#fff"/></svg>
<svg style="position:absolute;left:46.6px;top:386.6px;" width="32" height="32" viewBox="0 0 32 32" fill="none"><rect x="2.5" y="2.5" width="27" height="27" rx="8" stroke="#ea365f" stroke-width="3" fill="none"/><circle cx="16" cy="16" r="6" stroke="#ea365f" stroke-width="3" fill="none"/><circle cx="23.4" cy="8.6" r="1.6" fill="#ea365f"/></svg>
<svg style="position:absolute;left:46.6px;top:457.4px;" width="32" height="32" viewBox="0 0 32 32" fill="none"><circle cx="4.6" cy="4.4" r="3.7" fill="#12a6fc"/><rect x="1.3" y="10.5" width="6.6" height="20.5" fill="#12a6fc"/><path d="M12 10.5 H18.3 V13.3 C19.3 11.4 21.5 10 24.4 10 C29.6 10 31 13.4 31 18.4 V31 H24.4 V19.8 C24.4 17.3 24 15.6 21.6 15.6 C19.3 15.6 18.6 17.3 18.6 19.6 V31 H12 Z" fill="#12a6fc"/></svg>
<svg style="position:absolute;left:47.5px;top:533.3px;" width="33" height="33" viewBox="0 0 32 32" fill="none"><path transform="translate(-1.2,-1.0)" d="M20.5 2 H16.2 V21 C16.2 23.5 14.3 25.3 12 25.3 C9.6 25.3 7.8 23.4 7.8 21.1 C7.8 18.7 9.7 16.9 12 16.9 C12.5 16.9 12.9 17 13.3 17.1 V12.7 C12.9 12.6 12.4 12.6 12 12.6 C7.3 12.6 3.5 16.4 3.5 21.1 C3.5 25.8 7.3 29.6 12 29.6 C16.7 29.6 20.5 25.8 20.5 21.1 V11.6 C22.3 12.9 24.5 13.6 26.8 13.6 V9.3 C23.3 9.3 20.5 6.5 20.5 3 Z" fill="#25f4ee"/><path transform="translate(1.2,1.0)" d="M20.5 2 H16.2 V21 C16.2 23.5 14.3 25.3 12 25.3 C9.6 25.3 7.8 23.4 7.8 21.1 C7.8 18.7 9.7 16.9 12 16.9 C12.5 16.9 12.9 17 13.3 17.1 V12.7 C12.9 12.6 12.4 12.6 12 12.6 C7.3 12.6 3.5 16.4 3.5 21.1 C3.5 25.8 7.3 29.6 12 29.6 C16.7 29.6 20.5 25.8 20.5 21.1 V11.6 C22.3 12.9 24.5 13.6 26.8 13.6 V9.3 C23.3 9.3 20.5 6.5 20.5 3 Z" fill="#fe2c55"/><path transform="translate(0,0)" d="M20.5 2 H16.2 V21 C16.2 23.5 14.3 25.3 12 25.3 C9.6 25.3 7.8 23.4 7.8 21.1 C7.8 18.7 9.7 16.9 12 16.9 C12.5 16.9 12.9 17 13.3 17.1 V12.7 C12.9 12.6 12.4 12.6 12 12.6 C7.3 12.6 3.5 16.4 3.5 21.1 C3.5 25.8 7.3 29.6 12 29.6 C16.7 29.6 20.5 25.8 20.5 21.1 V11.6 C22.3 12.9 24.5 13.6 26.8 13.6 V9.3 C23.3 9.3 20.5 6.5 20.5 3 Z" fill="#000"/></svg>
<svg style="position:absolute;left:43.7px;top:608px;" width="41" height="32" viewBox="0 0 41 32" fill="none"><rect x="0.5" y="2" width="40" height="28" rx="7.5" fill="#ff0000"/><path d="M16.2 9.8 L26.6 16 L16.2 22.2 Z" fill="#fff"/></svg>
<svg style="position:absolute;left:45.8px;top:679.8px;" width="34" height="34" viewBox="0 0 32 32" fill="none"><circle cx="16" cy="16" r="15.5" fill="#ea4571"/><path d="M16.4 7.2 C11.3 7.2 8.6 10.5 8.6 14.1 C8.6 15.8 9.5 17.9 11 18.6 C11.2 18.7 11.4 18.6 11.4 18.4 L11.8 17 C11.8 16.9 11.8 16.7 11.7 16.6 C11.2 16 10.8 15 10.8 14 C10.8 11.5 12.7 9.1 16 9.1 C18.8 9.1 20.8 11 20.8 13.7 C20.8 16.8 19.2 18.9 17.2 18.9 C16.1 18.9 15.2 18 15.5 16.9 C15.8 15.5 16.5 14.1 16.5 13.1 C16.5 12.2 16 11.5 15 11.5 C13.9 11.5 12.9 12.7 12.9 14.3 C12.9 15.3 13.3 16 13.3 16 L11.9 21.9 C11.5 23.6 11.9 26.4 12 26.6 C12 26.8 12.2 26.8 12.3 26.7 C12.5 26.5 14 24.3 14.5 22.6 L15.2 19.9 C15.6 20.6 16.7 21.2 17.9 21.2 C21.4 21.2 23.9 18 23.9 14 C23.9 10.2 20.8 7.2 16.4 7.2 Z" fill="#fff" transform="translate(16 16) scale(1.24) translate(-16.2 -16.8)"/></svg>
<span class="t" style="left:21.5px;top:756.3px;font-size:28px;color:#1f2a44;letter-spacing:0.33px;-webkit-text-stroke:0.6px #1f2a44;">Competitor Analytics</span>
<span class="t" style="left:119.6px;top:830.7px;font-size:24px;color:#5a6a85;letter-spacing:-0.05px;">Facebook</span>
<span class="t" style="left:119.6px;top:905.7px;font-size:24px;color:#5a6a85;letter-spacing:0.23px;">Instagram</span>
<svg style="position:absolute;left:46.6px;top:827px;" width="32" height="32" viewBox="0 0 32 32" fill="none"><rect x="1" y="1" width="30" height="30" rx="4" fill="#18a4fb"/><path transform="translate(-2.6 0)" d="M21.8 31 V19.6 H25.5 L26.1 15.2 H21.8 V12.6 C21.8 11.3 22.3 10.5 24 10.5 H26.2 V6.6 C25.6 6.5 24.4 6.4 23.1 6.4 C19.8 6.4 17.4 8.4 17.4 12.2 V15.2 H13.6 V19.6 H17.4 V31 Z" fill="#fff"/></svg>
<svg style="position:absolute;left:46.6px;top:900.9px;" width="32" height="32" viewBox="0 0 32 32" fill="none"><rect x="2.5" y="2.5" width="27" height="27" rx="8" stroke="#ea365f" stroke-width="3" fill="none"/><circle cx="16" cy="16" r="6" stroke="#ea365f" stroke-width="3" fill="none"/><circle cx="23.4" cy="8.6" r="1.6" fill="#ea365f"/></svg>
<span class="t" style="left:21.5px;top:975.8px;font-size:28px;color:#1f2a44;letter-spacing:0.27px;-webkit-text-stroke:0.6px #1f2a44;">Performance Analytics</span>
<div style="position:absolute;left:36px;top:1038px;width:56px;height:56px;background:#effaf3;border-radius:13px"></div>
<svg style="position:absolute;left:36px;top:1038px;" width="56" height="56" viewBox="0 0 56 56" fill="none"><g stroke="#2fbf6e" stroke-width="3.4" stroke-linecap="round" stroke-linejoin="round" fill="none"><path d="M10 24.5 L21.5 15.5 L32.6 23.7 L42.5 14.3"/><path d="M11.1 31.5 V38.8 M21.5 27.8 V38.8 M32.6 31.5 V38.8 M42.6 27.8 V38.8"/></g></svg>
<span class="t" style="left:119.3px;top:1051.1px;font-size:24px;color:#5a6a85;letter-spacing:-0.02px;">Campaign &amp; Label</span>
<span class="t" style="left:21.5px;top:1123.1px;font-size:28px;color:#1f2a44;letter-spacing:0.03px;-webkit-text-stroke:0.6px #1f2a44;">Web Analytics</span>
<div style="position:absolute;left:36px;top:1184px;width:56px;height:56px;background:#f8f5fe;border-radius:13px"></div>
<svg style="position:absolute;left:36px;top:1184px;" width="56" height="56" viewBox="0 0 56 56" fill="none"><rect x="14" y="20" width="7.6" height="21.4" rx="3.8" fill="#ee6dae"/><rect x="24.3" y="31" width="7.6" height="10.4" rx="3.8" fill="#a87bf0"/><rect x="34.7" y="14" width="7.6" height="27.4" rx="3.8" fill="#5bbff5"/></svg>
<span class="t" style="left:119.3px;top:1199.7px;font-size:24px;color:#5a6a85;letter-spacing:-0.20px;">Usermaven</span>
<span class="t" style="left:21.8px;top:1270.9px;font-size:28px;color:#1f2a44;letter-spacing:-0.12px;-webkit-text-stroke:0.6px #1f2a44;">Manage Reports</span>
<div style="position:absolute;left:36px;top:1332px;width:56px;height:56px;background:#eff7fe;border-radius:13px"></div>
<svg style="position:absolute;left:36px;top:1332px;" width="56" height="56" viewBox="0 0 56 56" fill="none"><g stroke="#8f90f6" stroke-width="2.6" stroke-linecap="round" stroke-linejoin="round"><rect x="11" y="10.5" width="24" height="33" rx="3.5" fill="#dfe3fb"/><path d="M17 19 H21.5 M17 26.3 H20 M17 33.6 H21.5"/><circle cx="34" cy="26" r="8.6" fill="#eef0fd"/><path d="M34 21.5 V26.3 L36.6 28.6"/></g></svg>
<span class="t" style="left:119.3px;top:1346.4px;font-size:24px;color:#5a6a85;">Schedule Reports</span>
<div style="position:absolute;left:36px;top:1404px;width:56px;height:56px;background:#eff7fe;border-radius:13px"></div>
<svg style="position:absolute;left:36px;top:1404px;" width="56" height="56" viewBox="0 0 56 56" fill="none"><g stroke="#21a9ff" stroke-width="2.6" stroke-linecap="round" stroke-linejoin="round"><path d="M36 27 V15.5 Q36 12 32.5 12 H14.5 Q11 12 11 15.5 V41 Q11 44.5 14.5 44.5 H27" fill="#cfeaff"/><path d="M17 20.3 H29.5 M17 27 H26 M17 34.3 H29.5" stroke-width="2.4"/><path d="M36.3 32.5 V43 M32.3 39.5 L36.3 43.5 L40.3 39.5"/></g></svg>
<span class="t" style="left:119.3px;top:1420.7px;font-size:24px;color:#5a6a85;letter-spacing:0.14px;">Download Reports</span>
<div style="position:absolute;left:36px;top:1478px;width:56px;height:56px;background:#eff7fe;border-radius:13px"></div>
<svg style="position:absolute;left:36px;top:1478px;" width="56" height="56" viewBox="0 0 56 56" fill="none"><g stroke="#4fc07f" stroke-width="2.6" stroke-linecap="round" stroke-linejoin="round"><path d="M36 29 V16 Q36 12.5 32.5 12.5 H14.5 Q11 12.5 11 16 V42 Q11 45.5 14.5 45.5 H26" fill="#d5eedd"/><path d="M17 20.8 H29.5 M17 27.5 H26 M17 34.5 H21" stroke-width="2.4"/><circle cx="35.8" cy="38.2" r="6.8" fill="#d5eedd"/><circle cx="35.8" cy="38.2" r="2.6" stroke-width="2"/></g></svg>
<span class="t" style="left:119.3px;top:1495.0px;font-size:24px;color:#5a6a85;letter-spacing:0.16px;">Reports Settings</span>
<div style="position:absolute;left:0px;top:0px;width:3132px;height:120px;background:linear-gradient(180deg,#005fd3 0%,#0064de 60%,#0067e6 100%);box-shadow:0 1px 4px rgba(0,40,120,.14)"></div>
<div style="position:absolute;left:26px;top:28px;width:63px;height:63px;background:#fff;border-radius:50%"></div>
<svg style="position:absolute;left:26px;top:28px;" width="63" height="63" viewBox="0 0 63 63" fill="none"><g stroke="#0a66e0" stroke-width="6.2" stroke-linecap="round"><path d="M14.5 35 L24 22.5"/><path d="M27 38.5 L37.5 25"/><path d="M39.5 41.5 L48.5 29.5"/></g></svg>
<div style="position:absolute;left:141px;top:18px;width:459px;height:86px;background:rgba(255,255,255,.125);border-radius:14px"></div>
<div style="position:absolute;left:170px;top:26px;width:70px;height:70px;background:#eff0f2;border-radius:50%"></div>
<span class="t" style="left:181.5px;top:54.7px;font-size:11px;color:#dcdde1;font-style:italic;">No Media</span>
<span class="t" style="left:258.0px;top:30.8px;font-size:18px;color:#fff;font-weight:700;letter-spacing:-1.34px;">WORKSPACE</span>
<span class="t" style="left:258.0px;top:58.9px;font-size:24.5px;color:#fff;letter-spacing:0.37px;-webkit-text-stroke:0.7px #fff;">Bloomville</span>
<svg style="position:absolute;left:545px;top:49px;" width="26" height="18" viewBox="0 0 26 18" fill="none"><path d="M3 3.5 L13 13.5 L23 3.5" stroke="#fff" stroke-width="3.6" stroke-linecap="round" stroke-linejoin="round"/></svg>
<svg style="position:absolute;left:652px;top:44px;" width="30" height="32" viewBox="0 0 30 32" fill="none"><g stroke="#fff" stroke-width="3" stroke-linecap="round" stroke-linejoin="round" fill="none"><path d="M4.5 29 V5"/><path d="M4.5 5.5 C9 3 13 3.5 15.5 5 C18.5 6.8 22 6.5 25 4.5 V18 C22 20 18.5 20.3 15.5 18.5 C13 17 9 16.5 4.5 19"/></g></svg>
<div style="position:absolute;left:682px;top:46px;width:16px;height:16px;background:#fc2e62;border-radius:50%"></div>
<div style="position:absolute;left:2079px;top:11px;width:131px;height:99px;background:rgba(255,255,255,.18);border-radius:10px"></div>
<span class="t" style="left:1706.5px;top:70.5px;font-size:23px;color:#fff;font-weight:700;letter-spacing:-0.46px;">Dashboard</span>
<span class="t" style="left:1910.2px;top:70.5px;font-size:23px;color:#fff;font-weight:700;letter-spacing:-0.70px;">Publisher</span>
<span class="t" style="left:2096.5px;top:70.5px;font-size:23px;color:#fff;font-weight:700;letter-spacing:-0.70px;">Analytics</span>
<span class="t" style="left:2281.2px;top:70.5px;font-size:23px;color:#fff;font-weight:700;letter-spacing:-0.87px;">Inbox</span>
<span class="t" style="left:2426.5px;top:70.5px;font-size:23px;color:#fff;font-weight:700;letter-spacing:-0.77px;">Discover</span>
<span class="t" style="left:2605.5px;top:70.5px;font-size:23px;color:#fff;font-weight:700;letter-spacing:-0.50px;">Media Library</span>
<svg style="position:absolute;left:1750px;top:20px;" width="30" height="33" viewBox="0 0 30 33" fill="none"><g stroke="#fff" stroke-width="3" stroke-linecap="round" stroke-linejoin="round" fill="none"><path d="M3.5 13.5 L15 3.5 L26.5 13.5 V27 Q26.5 29.5 24 29.5 H6 Q3.5 29.5 3.5 27 Z"/><path d="M11 29 V21.5 Q11 18 15 18 Q19 18 19 21.5 V29"/></g></svg>
<svg style="position:absolute;left:1943px;top:19px;" width="32" height="35" viewBox="0 0 32 35" fill="none"><g stroke="#fff" stroke-width="3" stroke-linecap="round" stroke-linejoin="round" fill="none"><rect x="3.5" y="5.5" width="25" height="26" rx="5"/><path d="M3.5 13.5 H28.5"/><path d="M10.5 2.5 V7.5 M21.5 2.5 V7.5"/></g><g fill="#fff"><rect x="8.3" y="17.3" width="3.4" height="3.4" rx="1"/><rect x="14.3" y="17.3" width="3.4" height="3.4" rx="1"/><rect x="20.3" y="17.3" width="3.4" height="3.4" rx="1"/><rect x="8.3" y="23.3" width="3.4" height="3.4" rx="1"/><rect x="14.3" y="23.3" width="3.4" height="3.4" rx="1"/><rect x="20.3" y="23.3" width="3.4" height="3.4" rx="1"/></g></svg>
<svg style="position:absolute;left:2128px;top:19px;" width="34" height="35" viewBox="0 0 34 35" fill="none"><g stroke="#fff" stroke-width="3" stroke-linecap="round" stroke-linejoin="round" fill="none"><path d="M14.5 9 A11.3 11.3 0 1 0 25.8 20.3 H14.5 Z"/><path d="M19.5 3.5 A10.5 10.5 0 0 1 30 14 H19.5 Z"/></g></svg>
<svg style="position:absolute;left:2293px;top:19px;" width="34" height="35" viewBox="0 0 34 35" fill="none"><g stroke="#fff" stroke-width="3" stroke-linecap="round" stroke-linejoin="round" fill="none"><path d="M17 4 A13.2 13.2 0 1 1 9.5 28.2 Q7 30.3 3.5 30.3 Q6 27.5 5.8 23.5 A13.2 13.2 0 0 1 17 4 Z"/><path d="M10.5 14 H24.5 M10.5 20 H18.5"/></g></svg>
<svg style="position:absolute;left:2455px;top:19px;" width="34" height="35" viewBox="0 0 34 35" fill="none"><g stroke="#fff" stroke-width="3" stroke-linecap="round" stroke-linejoin="round" fill="none"><circle cx="16.5" cy="17.5" r="13"/><path d="M22.5 11.5 L19.3 20.3 L10.5 23.5 L13.7 14.7 Z"/></g></svg>
<svg style="position:absolute;left:2660px;top:19px;" width="36" height="35" viewBox="0 0 36 35" fill="none"><g stroke="#fff" stroke-width="3" stroke-linecap="round" stroke-linejoin="round" fill="none"><rect x="3.5" y="3.5" width="21.5" height="22.5" rx="4.5"/><path d="M30.5 10 V25.5 Q30.5 31.5 24.5 31.5 H11"/><path d="M4.5 23 L13 13.5 L18 19 L20.5 16.5 L24.5 21"/><path d="M6 9 H11"/></g></svg>
<div style="position:absolute;left:2795px;top:16px;width:1.5px;height:87px;background:rgba(255,255,255,.22)"></div>
<div style="position:absolute;left:2923px;top:16px;width:1.5px;height:87px;background:rgba(255,255,255,.22)"></div>
<div style="position:absolute;left:2830px;top:33px;width:55px;height:55px;background:rgba(255,255,255,.2);border-radius:50%"></div>
<svg style="position:absolute;left:2841px;top:43px;" width="34" height="34" viewBox="0 0 34 34" fill="none"><g stroke="#fff" stroke-width="3" stroke-linecap="round" stroke-linejoin="round" fill="none"><path d="M6 24.5 C8.5 22 8.8 19 8.8 15 C8.8 9.5 12 5.5 17 5.5 C22 5.5 25.2 9.5 25.2 15 C25.2 19 25.5 22 28 24.5 Z"/><path d="M14.5 28.5 Q17 31 19.5 28.5"/></g></svg>
<div style="position:absolute;left:2853px;top:10px;width:37px;height:37px;background:#f2495c;border-radius:50%"></div>
<span class="t" style="left:2860.2px;top:17.7px;font-size:21px;color:#fff;font-weight:700;letter-spacing:-0.18px;">36</span>
<div style="position:absolute;left:2981px;top:27px;width:70px;height:70px;background:#ebe9e6;border-radius:50%;overflow:hidden"><div style="position:absolute;left:21px;top:11px;width:29px;height:29px;border-radius:50%;background:#b7b5b0"></div><div style="position:absolute;left:8px;top:38px;width:55px;height:55px;border-radius:50%;background:#b7b5b0"></div></div>
<div style="position:absolute;left:3086.4px;top:48.6px;width:6px;height:6px;background:#fff;border-radius:50%"></div>
<div style="position:absolute;left:3086.4px;top:57px;width:6px;height:6px;background:#fff;border-radius:50%"></div>
<div style="position:absolute;left:3086.4px;top:65.3px;width:6px;height:6px;background:#fff;border-radius:50%"></div>
<div style="position:absolute;left:3108px;top:120px;width:24px;height:1770px;background:#f5f6f8"></div>
<div style="position:absolute;left:3114px;top:127px;width:12px;height:373px;background:#d3d4d7;border-radius:6px"></div>
<div style="position:absolute;left:2964px;top:1609.5px;width:112px;height:112px;background:#0068e6;border-radius:50%"></div>
<svg style="position:absolute;left:2964px;top:1609.5px;" width="112" height="112" viewBox="0 0 112 112" fill="none"><g stroke="#fff" stroke-width="2.7" stroke-linecap="round" stroke-linejoin="round" fill="none"><circle cx="55.6" cy="31" r="3.8"/><path d="M55.6 35 V42"/><path d="M36.5 42 H76 Q82 42 82 48 V72.500 Q82 78.500 76 78.500 H53 L39 85.500 L40.500 78.500 H36.500 Q30.500 78.500 30.500 72.500 V48 Q30.500 42 36.500 42 Z"/><path d="M26 51.500 Q22.500 51.500 22.500 55 V60.500 Q22.500 64 26 64"/><path d="M86.500 51.500 Q90 51.500 90 55 V60.500 Q90 64 86.500 64"/><circle cx="42.800" cy="57" r="3.800"/><circle cx="67.300" cy="57" r="3.800"/><path d="M49.800 65 Q55.500 69.500 61.200 65"/></g></svg>
<div style="position:absolute;left:2964px;top:1738px;width:112px;height:112px;background:#344c73;border-radius:50%"></div>
<span class="t" style="left:3006.9px;top:1771.3px;font-size:44px;color:#fff;font-weight:700;">?</span>
</body></html>
